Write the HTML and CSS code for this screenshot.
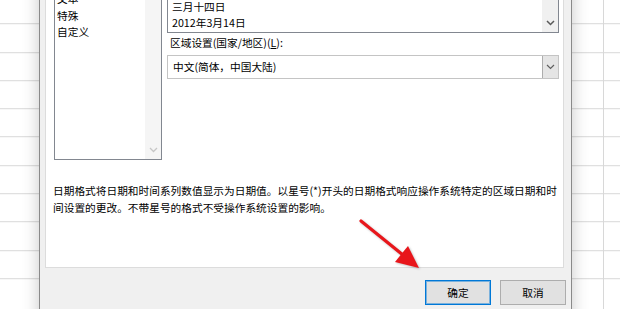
FILE: index.html
```html
<!DOCTYPE html>
<html lang="zh-CN">
<head>
  <meta charset="UTF-8" />
  <title>设置单元格格式</title>
  <link rel="stylesheet" href="styles.css">
</head>
<body>

<div class="desk">
  <div class="dialog">
    <div class="panel">
      <div class="row">
        <div class="listbox cat-list">
          <ul class="items">
            <li>文本</li>
            <li>特殊</li>
            <li>自定义</li>
          </ul>
          <div class="vscroll off">
            <svg class="chev" width="9" height="6" viewBox="0 0 9 6"><path d="M1 1 L4.5 4.5 L8 1" fill="none" stroke="#c6c6c6" stroke-width="1.3"/></svg>
          </div>
        </div>

        <div class="right">
          <div class="listbox type-list">
            <ul class="items">
              <li>三月十四日</li>
              <li>2012年3月14日</li>
            </ul>
            <div class="vscroll">
              <svg class="chev" width="9" height="6" viewBox="0 0 9 6"><path d="M1 1 L4.5 4.5 L8 1" fill="none" stroke="#5a5a5a" stroke-width="1.5"/></svg>
            </div>
          </div>
          <div class="label">区域设置(国家/地区)(<u>L</u>):</div>
          <div class="combo">
            <span class="combo-text">中文(简体，中国大陆)</span>
            <span class="combo-btn">
              <svg width="9" height="6" viewBox="0 0 9 6"><path d="M1 1 L4.5 4.5 L8 1" fill="none" stroke="#606060" stroke-width="1.2"/></svg>
            </span>
          </div>
        </div>
      </div>

      <p class="desc">日期格式将日期和时间系列数值显示为日期值。以星号(*)开头的日期格式响应操作系统特定的区域日期和时<br>间设置的更改。不带星号的格式不受操作系统设置的影响。</p>
    </div>

    <div class="buttons">
      <button class="btn default">确定</button>
      <button class="btn">取消</button>
    </div>
  </div>

  <!-- red pointer drawn over the screenshot -->
  <svg class="arrow" width="620" height="309" viewBox="0 0 620 309">
    <line x1="361" y1="221" x2="403" y2="255" stroke="#e8161b" stroke-width="3.2" stroke-linecap="round"/>
    <polygon points="419,268 395,262 401,254.5 408,246" fill="#e8161b"/>
  </svg>
</div>

</body>
</html>
```

FILE: styles.css
```css
* {
  box-sizing: border-box;
}

body {
  margin: 0;
  width: 620px;
  height: 309px;
  overflow: hidden;
  font-family: "Noto Sans CJK SC", "Microsoft YaHei", sans-serif;
  font-size: 10.7px;
  color: #000;
}

/* spreadsheet behind the dialog */
.desk {
  position: relative;
  width: 620px;
  height: 309px;
  overflow: hidden;
  background-color: #fff;
  background-image:
    linear-gradient(to right, transparent 603px, #d8d8d8 603px, #d8d8d8 604px, transparent 604px),
    repeating-linear-gradient(to bottom, transparent 0, transparent 27.3px, #d8d8d8 27.3px, #d8d8d8 28.3px);
  background-position: 0 0, 0 -3.8px;
}

.dialog {
  width: 533px;
  height: 360px;
  margin: -30px 0 0 39px;
  background: #f0f0f0;
  border-left: 1px solid #8a8a8a;
  border-right: 1px solid #8a8a8a;
  box-shadow: 0 0 16px rgba(0, 0, 0, 0.22);
}

.panel {
  height: 298px;
  width: 519px;
  margin-left: 5px;
  padding: 19px 0 0 8px;
  background: #fff;
  border: 1px solid #dcdcdc;
}

.row {
  display: flex;
}

.listbox {
  display: flex;
  background: #fff;
  border: 1px solid #828790;
}

.items {
  flex: 1;
  list-style: none;
  margin: 0;
  padding: 0;
}

.cat-list {
  width: 108px;
  height: 170px;
}

.cat-list .items {
  padding-left: 2px;
}

.cat-list li {
  line-height: 16.5px;
  height: 16.5px;
}

.vscroll {
  width: 16px;
  background: #f0f0f0;
  display: flex;
  flex-direction: column;
  justify-content: flex-end;
  align-items: center;
  padding-bottom: 6px;
}

.vscroll.off {
  background: #f5f5f5;
}

.right {
  width: 392px;
  margin-left: 5px;
}

.type-list {
  height: 43px;
}

.type-list .items {
  padding: 8px 0 0 4px;
}

.type-list li {
  line-height: 16px;
  height: 16px;
}

.label {
  line-height: 16px;
  margin: 2px 0 0 3px;
}

.combo {
  display: flex;
  height: 24px;
  margin-top: 4px;
  background: #fff;
  border: 1px solid #c4c4c4;
}

.combo-text {
  flex: 1;
  line-height: 22px;
  padding-left: 5px;
}

.combo-btn {
  width: 16px;
  display: flex;
  align-items: center;
  justify-content: center;
  background: #e5e5e5;
  border-left: 1px solid #adadad;
}

.desc {
  margin: 22px 0 0 -1px;
  line-height: 17px;
  white-space: nowrap;
}

.buttons {
  display: flex;
  justify-content: flex-end;
  gap: 9px;
  margin-top: 12px;
  padding-right: 5px;
}

.btn {
  width: 66px;
  height: 25px;
  padding: 0;
  font-family: inherit;
  font-size: 10.7px;
  color: #000;
  background: #e1e1e1;
  border: 1px solid #adadad;
}

.btn.default {
  border-color: #0078d7;
  box-shadow: inset 0 0 0 1px rgba(0, 120, 215, 0.45);
}

.arrow {
  position: absolute;
  left: 0;
  top: 0;
  filter: drop-shadow(1px 1px 1px rgba(0, 0, 0, 0.25));
}
```
